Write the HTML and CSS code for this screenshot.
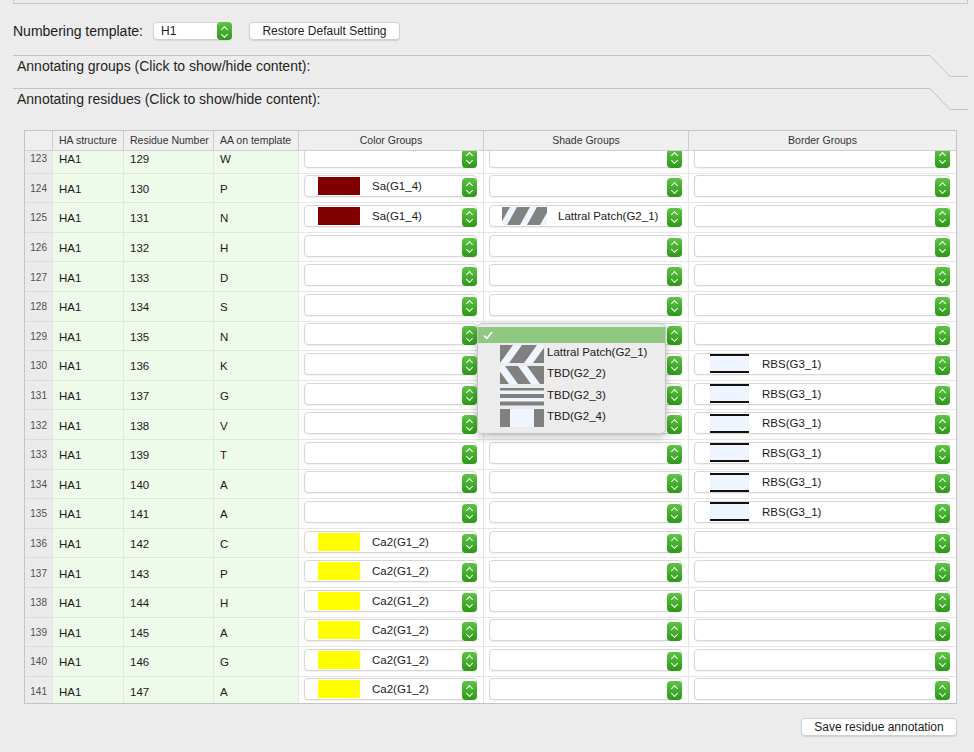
FILE: index.html
```html
<!DOCTYPE html>
<html>
<head>
<meta charset="utf-8">
<link rel="stylesheet" href="styles.css">
</head>
<body>
<div class="topframe"></div>
<div class="toolbar">
  <span class="label">Numbering template:</span>
  <div class="select"><span>H1</span><span class="step"></span></div>
  <button class="btn restore">Restore Default Setting</button>
</div>
<div class="section">
  <div class="section-bar">Annotating groups (Click to show/hide content):</div>
  <svg class="tab" width="38" height="33" viewBox="0 0 38 33"><polyline points="0,0.5 20,21.5 38,21.5" fill="none" stroke="#c3c3c3" stroke-width="1"/></svg>
</div>
<div class="section">
  <div class="section-bar">Annotating residues (Click to show/hide content):</div>
  <svg class="tab" width="38" height="33" viewBox="0 0 38 33"><polyline points="0,0.5 20,21.5 38,21.5" fill="none" stroke="#c3c3c3" stroke-width="1"/></svg>
</div>

<div class="table">
  <div class="thead">
    <div class="th"></div>
    <div class="th left">HA structure</div>
    <div class="th left">Residue Number</div>
    <div class="th left">AA on template</div>
    <div class="th">Color Groups</div>
    <div class="th">Shade Groups</div>
    <div class="th">Border Groups</div>
  </div>
  <div class="tbody">
    <div class="rows">
      <div class="row"><div class="num">123</div><div class="g">HA1</div><div class="g">129</div><div class="g">W</div>
        <div class="c"><div class="combo"><span class="step"></span></div></div>
        <div class="c"><div class="combo"><span class="step"></span></div></div>
        <div class="c"><div class="combo"><span class="step"></span></div></div></div>
      <div class="row"><div class="num">124</div><div class="g">HA1</div><div class="g">130</div><div class="g">P</div>
        <div class="c"><div class="combo"><span class="sw maroon"></span><span class="ct">Sa(G1_4)</span><span class="step"></span></div></div>
        <div class="c"><div class="combo"><span class="step"></span></div></div>
        <div class="c"><div class="combo"><span class="step"></span></div></div></div>
      <div class="row"><div class="num">125</div><div class="g">HA1</div><div class="g">131</div><div class="g">N</div>
        <div class="c"><div class="combo"><span class="sw maroon"></span><span class="ct">Sa(G1_4)</span><span class="step"></span></div></div>
        <div class="c"><div class="combo"><svg class="shade" width="45" height="18" viewBox="0 0 45 18"><rect width="45" height="18" fill="#828282"/><polygon points="8,0 15,0 5,18 -2,18" fill="#eef5fe"/><polygon points="28,0 35,0 25,18 18,18" fill="#eef5fe"/><polygon points="48,0 55,0 45,18 38,18" fill="#eef5fe"/></svg><span class="st">Lattral Patch(G2_1)</span><span class="step"></span></div></div>
        <div class="c"><div class="combo"><span class="step"></span></div></div></div>
      <div class="row"><div class="num">126</div><div class="g">HA1</div><div class="g">132</div><div class="g">H</div>
        <div class="c"><div class="combo"><span class="step"></span></div></div>
        <div class="c"><div class="combo"><span class="step"></span></div></div>
        <div class="c"><div class="combo"><span class="step"></span></div></div></div>
      <div class="row"><div class="num">127</div><div class="g">HA1</div><div class="g">133</div><div class="g">D</div>
        <div class="c"><div class="combo"><span class="step"></span></div></div>
        <div class="c"><div class="combo"><span class="step"></span></div></div>
        <div class="c"><div class="combo"><span class="step"></span></div></div></div>
      <div class="row"><div class="num">128</div><div class="g">HA1</div><div class="g">134</div><div class="g">S</div>
        <div class="c"><div class="combo"><span class="step"></span></div></div>
        <div class="c"><div class="combo"><span class="step"></span></div></div>
        <div class="c"><div class="combo"><span class="step"></span></div></div></div>
      <div class="row"><div class="num">129</div><div class="g">HA1</div><div class="g">135</div><div class="g">N</div>
        <div class="c"><div class="combo"><span class="step"></span></div></div>
        <div class="c"><div class="combo"><span class="step"></span></div></div>
        <div class="c"><div class="combo"><span class="step"></span></div></div></div>
      <div class="row"><div class="num">130</div><div class="g">HA1</div><div class="g">136</div><div class="g">K</div>
        <div class="c"><div class="combo"><span class="step"></span></div></div>
        <div class="c"><div class="combo"><span class="step"></span></div></div>
        <div class="c"><div class="combo"><span class="bsw"></span><span class="bt">RBS(G3_1)</span><span class="step"></span></div></div></div>
      <div class="row"><div class="num">131</div><div class="g">HA1</div><div class="g">137</div><div class="g">G</div>
        <div class="c"><div class="combo"><span class="step"></span></div></div>
        <div class="c"><div class="combo"><span class="step"></span></div></div>
        <div class="c"><div class="combo"><span class="bsw"></span><span class="bt">RBS(G3_1)</span><span class="step"></span></div></div></div>
      <div class="row"><div class="num">132</div><div class="g">HA1</div><div class="g">138</div><div class="g">V</div>
        <div class="c"><div class="combo"><span class="step"></span></div></div>
        <div class="c"><div class="combo"><span class="step"></span></div></div>
        <div class="c"><div class="combo"><span class="bsw"></span><span class="bt">RBS(G3_1)</span><span class="step"></span></div></div></div>
      <div class="row"><div class="num">133</div><div class="g">HA1</div><div class="g">139</div><div class="g">T</div>
        <div class="c"><div class="combo"><span class="step"></span></div></div>
        <div class="c"><div class="combo"><span class="step"></span></div></div>
        <div class="c"><div class="combo"><span class="bsw"></span><span class="bt">RBS(G3_1)</span><span class="step"></span></div></div></div>
      <div class="row"><div class="num">134</div><div class="g">HA1</div><div class="g">140</div><div class="g">A</div>
        <div class="c"><div class="combo"><span class="step"></span></div></div>
        <div class="c"><div class="combo"><span class="step"></span></div></div>
        <div class="c"><div class="combo"><span class="bsw"></span><span class="bt">RBS(G3_1)</span><span class="step"></span></div></div></div>
      <div class="row"><div class="num">135</div><div class="g">HA1</div><div class="g">141</div><div class="g">A</div>
        <div class="c"><div class="combo"><span class="step"></span></div></div>
        <div class="c"><div class="combo"><span class="step"></span></div></div>
        <div class="c"><div class="combo"><span class="bsw"></span><span class="bt">RBS(G3_1)</span><span class="step"></span></div></div></div>
      <div class="row"><div class="num">136</div><div class="g">HA1</div><div class="g">142</div><div class="g">C</div>
        <div class="c"><div class="combo"><span class="sw yellow"></span><span class="ct">Ca2(G1_2)</span><span class="step"></span></div></div>
        <div class="c"><div class="combo"><span class="step"></span></div></div>
        <div class="c"><div class="combo"><span class="step"></span></div></div></div>
      <div class="row"><div class="num">137</div><div class="g">HA1</div><div class="g">143</div><div class="g">P</div>
        <div class="c"><div class="combo"><span class="sw yellow"></span><span class="ct">Ca2(G1_2)</span><span class="step"></span></div></div>
        <div class="c"><div class="combo"><span class="step"></span></div></div>
        <div class="c"><div class="combo"><span class="step"></span></div></div></div>
      <div class="row"><div class="num">138</div><div class="g">HA1</div><div class="g">144</div><div class="g">H</div>
        <div class="c"><div class="combo"><span class="sw yellow"></span><span class="ct">Ca2(G1_2)</span><span class="step"></span></div></div>
        <div class="c"><div class="combo"><span class="step"></span></div></div>
        <div class="c"><div class="combo"><span class="step"></span></div></div></div>
      <div class="row"><div class="num">139</div><div class="g">HA1</div><div class="g">145</div><div class="g">A</div>
        <div class="c"><div class="combo"><span class="sw yellow"></span><span class="ct">Ca2(G1_2)</span><span class="step"></span></div></div>
        <div class="c"><div class="combo"><span class="step"></span></div></div>
        <div class="c"><div class="combo"><span class="step"></span></div></div></div>
      <div class="row"><div class="num">140</div><div class="g">HA1</div><div class="g">146</div><div class="g">G</div>
        <div class="c"><div class="combo"><span class="sw yellow"></span><span class="ct">Ca2(G1_2)</span><span class="step"></span></div></div>
        <div class="c"><div class="combo"><span class="step"></span></div></div>
        <div class="c"><div class="combo"><span class="step"></span></div></div></div>
      <div class="row"><div class="num">141</div><div class="g">HA1</div><div class="g">147</div><div class="g">A</div>
        <div class="c"><div class="combo"><span class="sw yellow"></span><span class="ct">Ca2(G1_2)</span><span class="step"></span></div></div>
        <div class="c"><div class="combo"><span class="step"></span></div></div>
        <div class="c"><div class="combo"><span class="step"></span></div></div></div>
    </div>
  </div>

  <div class="popup">
    <div class="sel"><svg width="10" height="9" viewBox="0 0 10 9"><polyline points="1,4.5 3.8,7.5 9,1" fill="none" stroke="#fff" stroke-width="1.6"/></svg></div>
    <div class="item">
      <svg width="44" height="18" viewBox="0 0 44 18"><rect width="44" height="18" fill="#808080"/><polygon points="13,0 22,0 9,18 0,18" fill="#eef5fe"/><polygon points="37,0 46,0 33,18 24,18" fill="#eef5fe"/></svg>
      <span>Lattral Patch(G2_1)</span>
    </div>
    <div class="item">
      <svg width="44" height="18" viewBox="0 0 44 18"><rect width="44" height="18" fill="#808080"/><polygon points="-4,0 5,0 18,18 9,18" fill="#eef5fe"/><polygon points="18,0 27,0 40,18 31,18" fill="#eef5fe"/></svg>
      <span>TBD(G2_2)</span>
    </div>
    <div class="item">
      <svg width="44" height="18" viewBox="0 0 44 18"><rect width="44" height="18" fill="#eef5fe"/><rect y="0" width="44" height="2.5" fill="#808080"/><rect y="6" width="44" height="4" fill="#808080"/><rect y="13.5" width="44" height="4" fill="#808080"/></svg>
      <span>TBD(G2_3)</span>
    </div>
    <div class="item">
      <svg width="44" height="18" viewBox="0 0 44 18"><rect width="44" height="18" fill="#eef5fe"/><rect x="0" width="10" height="18" fill="#808080"/><rect x="34" width="10" height="18" fill="#808080"/></svg>
      <span>TBD(G2_4)</span>
    </div>
  </div>
</div>

<div class="footer">
  <button class="btn save">Save residue annotation</button>
</div>
</body>
</html>
```

FILE: styles.css
```css
* { box-sizing: border-box; }

body {
  margin: 0;
  width: 974px;
  height: 752px;
  overflow: hidden;
  background: #ececec;
  font-family: "Liberation Sans", Arial, Helvetica, sans-serif;
  color: #1d1d1d;
}

.topframe {
  height: 4px;
  margin: 0 6px 0 13px;
  border: 1px solid #c9c9c9;
  border-top: none;
}

.toolbar {
  display: flex;
  align-items: center;
  height: 18px;
  margin-top: 18px;
  padding-left: 13px;
}

.label {
  width: 140px;
  font-size: 14px;
  color: #1a1a1a;
}

.select {
  display: flex;
  align-items: center;
  width: 79px;
  height: 18px;
  background: #fff;
  border: 1px solid #d2d2d2;
  border-radius: 4px;
  font-size: 12px;
  padding-left: 7px;
  box-shadow: 0 1px 1px rgba(0,0,0,0.08);
}

.select .step {
  height: 18px;
  margin-top: -1px;
  margin-bottom: -1px;
  align-self: center;
}

.btn {
  font-family: "Liberation Sans", Arial, Helvetica, sans-serif;
  font-size: 12px;
  color: #222;
  background: #fff;
  border: 1px solid #d0d0d0;
  border-radius: 4px;
  box-shadow: 0 1px 1px rgba(0,0,0,0.12);
  padding: 0;
  height: 18px;
}

.restore {
  width: 151px;
  margin-left: 17px;
}

.section {
  display: flex;
  height: 33px;
  margin: 0 6px 0 13px;
}

.toolbar + .section { margin-top: 15px; }

.section-bar {
  flex: 1;
  border-top: 1px solid #c3c3c3;
  padding: 2px 0 0 4px;
  font-size: 14px;
  line-height: 17px;
  color: #1f1f1f;
}

.tab { display: block; flex: none; }

.table {
  position: relative;
  width: 933px;
  margin: 9px 0 0 24px;
  border: 1px solid #c4c4c4;
  background: #fff;
}

.thead, .row {
  display: grid;
  grid-template-columns: 27px 71px 90px 85px 185px 205px 268px;
}

.thead {
  height: 20px;
  background: #efefef;
  border-bottom: 1px solid #d0d0d0;
}

.th {
  font-size: 10.5px;
  line-height: 19px;
  color: #333;
  text-align: center;
  white-space: nowrap;
}

.th + .th { border-left: 1px solid #cdcdcd; }

.th.left { text-align: left; padding-left: 6px; }

.tbody {
  height: 552px;
  overflow: hidden;
}

.rows { margin-top: -7px; }

.row { height: 29.6px; }

.num {
  display: flex;
  align-items: center;
  justify-content: flex-end;
  padding: 1px 5px 0 0;
  background: #ebebeb;
  border-bottom: 1px solid #dcdcdc;
  font-size: 10px;
  color: #505050;
}

.g {
  display: flex;
  align-items: center;
  padding: 2px 0 0 6px;
  background: #eefaea;
  border-left: 1px solid #dfe8dc;
  border-bottom: 1px solid #dfe8dc;
  font-size: 11.5px;
  color: #1a1a1a;
}

.c {
  display: flex;
  align-items: center;
  padding: 0 6px 3px 5px;
  border-left: 1px solid #e6e6e6;
  border-bottom: 1px solid #e6e6e6;
}

.combo {
  flex: 1;
  display: flex;
  align-items: center;
  height: 22px;
  background: #fff;
  border: 1px solid #d6d6d6;
  border-radius: 4px;
  box-shadow: 0 1px 1px rgba(0,0,0,0.06);
  font-size: 11.5px;
  color: #1a1a1a;
  white-space: nowrap;
}

.step {
  position: relative;
  flex: none;
  margin-left: auto;
  margin-right: -1px;
  width: 15px;
  height: 19px;
  align-self: flex-end;
  margin-bottom: -1px;
  border-radius: 4px;
  background: linear-gradient(#5ec444, #2c9818);
}

.step::before,
.step::after {
  content: "";
  position: absolute;
  left: 5.2px;
  width: 4px;
  height: 4px;
  border-left: 1.4px solid #fff;
  border-top: 1.4px solid #fff;
}

.step::before { top: 4.5px; transform: rotate(45deg); }
.step::after { top: 9.5px; transform: rotate(225deg); }

.sw {
  flex: none;
  width: 42px;
  height: 18px;
  margin-left: 13px;
}

.maroon { background: #800000; }
.yellow { background: #ffff00; }

.ct { margin-left: 12px; }

.shade { display: block; flex: none; margin-left: 12px; }

.st { margin-left: 11px; }

.bsw {
  flex: none;
  width: 39px;
  height: 19px;
  margin-left: 15px;
  background: #eef5fe;
  border-top: 2px solid #111;
  border-bottom: 2px solid #111;
}

.bt { margin-left: 13px; }

.popup {
  position: absolute;
  left: 452px;
  top: 192px;
  width: 189px;
  height: 111px;
  padding-top: 3px;
  background: rgba(236,236,236,0.98);
  border: 1px solid #c4c4c4;
  border-radius: 5px;
  box-shadow: 0 3px 10px rgba(0,0,0,0.25);
}

.sel {
  display: flex;
  align-items: center;
  height: 16px;
  padding-left: 5px;
  background: #8ec881;
}

.sel svg { display: block; }

.item {
  display: flex;
  align-items: center;
  height: 21.5px;
  padding-left: 22px;
}

.item svg { display: block; flex: none; }

.item span {
  margin-left: 3px;
  margin-bottom: 4px;
  font-size: 11.5px;
  color: #1a1a1a;
}

.footer {
  display: flex;
  justify-content: flex-end;
  width: 957px;
  margin-top: 14px;
}

.save {
  width: 156px;
  height: 18px;
}
```
